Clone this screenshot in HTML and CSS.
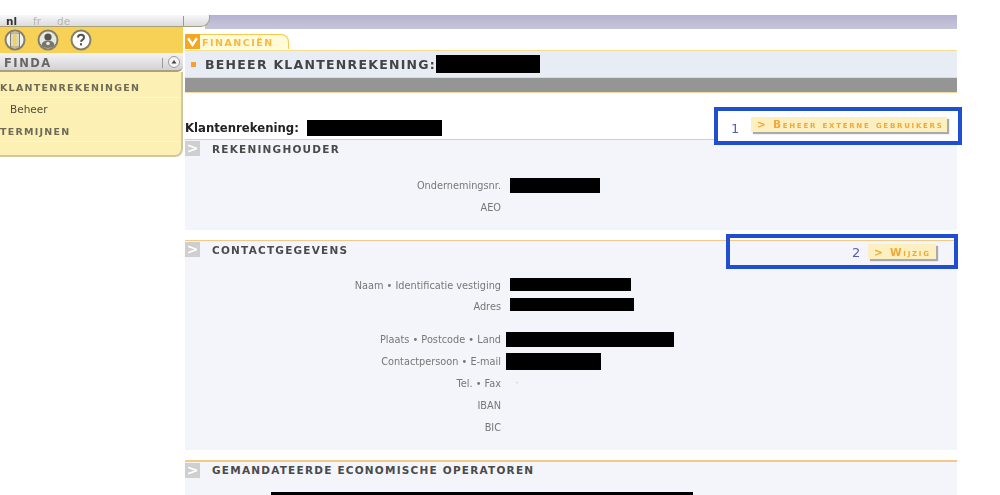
FILE: index.html
```html
<!DOCTYPE html>
<html lang="nl">
  <head>
    <meta charset="UTF-8" />
    <title>Beheer klantenrekening</title>
    <link rel="stylesheet" href="styles.css">
  </head>
  <body>
    <div class="page">
      <div class="sidebar">
        <div class="lang-bar">
          <span class="lang lang-active">nl</span>
          <span class="lang">fr</span>
          <span class="lang">de</span>
          <span class="lang-divider"></span>
        </div>
        <div class="toolbar">
          <svg class="tool-icon" viewBox="0 0 22 22">
            <circle cx="11" cy="11" r="9.5" fill="#f4f4ee" stroke="#85806c" stroke-width="2"/>
            <rect x="6.5" y="4" width="9" height="14" fill="#d8d8cc" stroke="#85806c"/>
            <rect x="9" y="4.500" width="3.500" height="13" fill="#f3d25c"/>
          </svg>
          <svg class="tool-icon" viewBox="0 0 22 22">
            <circle cx="11" cy="11" r="9.500" fill="#e8e8e2" stroke="#85806c" stroke-width="2"/>
            <circle cx="11" cy="8" r="3.600" fill="#55554f"/>
            <path d="M4.500 17c0-4 3-5.500 6.500-5.500s6.500 1.500 6.500 5.500c-2 2.500-11 2.500-13 0z" fill="#777770"/>
            <circle cx="11" cy="14.500" r="1.800" fill="#e8e8e2"/>
          </svg>
          <svg class="tool-icon" viewBox="0 0 22 22">
            <circle cx="11" cy="11" r="9.500" fill="#fff" stroke="#85806c" stroke-width="2"/>
            <path d="M8 8.500c0-3.700 6-3.700 6 0 0 2.300-3 2.300-3 4.300" fill="none" stroke="#55544c" stroke-width="2"/>
            <rect x="10" y="14.200" width="2" height="2.200" fill="#55544c"/>
          </svg>
        </div>
        <div class="menu-head">
          <span class="menu-title">FINDA</span>
          <span class="menu-divider"></span>
          <svg class="menu-toggle" viewBox="0 0 12 12">
            <circle cx="6" cy="6" r="5.500" fill="#f4f4f6" stroke="#9a9a9a"/>
            <path d="M3.500 7.500 6 4l2.500 3.500z" fill="#444"/>
          </svg>
        </div>
        <ul class="menu">
          <li class="menu-item">KLANTENREKENINGEN</li>
          <li class="menu-sub">Beheer</li>
          <li class="menu-item">TERMIJNEN</li>
        </ul>
      </div>

      <div class="main">
        <div class="top-bar"></div>
        <div class="tab-row">
          <span class="tab-arrow">
            <svg viewBox="0 0 12 12"><path d="M2 3l4 6 4-6" fill="none" stroke="#fff" stroke-width="2.200"/></svg>
          </span>
          <span class="tab">FINANCIËN</span>
        </div>
        <div class="title-band">
          <span class="title-dot"></span>
          <h1 class="title">BEHEER KLANTENREKENING:</h1>
          <span class="redact title-redact"></span>
        </div>
        <div class="gray-band"></div>

        <div class="account-row">
          <strong class="account-label">Klantenrekening:</strong>
          <span class="redact account-redact"></span>
          <button class="action action-wide">&gt; Beheer externe gebruikers</button>
        </div>

        <div class="section section-holder">
          <div class="section-head">
            <span class="section-arrow">&gt;</span>
            <h2 class="section-title">REKENINGHOUDER</h2>
          </div>
          <div class="fields">
            <div class="field"><span class="field-label">Ondernemingsnr.</span><span class="redact" style="width: 90px"></span></div>
            <div class="field"><span class="field-label">AEO</span></div>
          </div>
        </div>

        <div class="section section-contact">
          <div class="section-head">
            <span class="section-arrow">&gt;</span>
            <h2 class="section-title">CONTACTGEGEVENS</h2>
            <button class="action action-small">&gt; Wijzig</button>
          </div>
          <div class="fields">
            <div class="field"><span class="field-label">Naam • Identificatie vestiging</span><span class="redact redact-thin" style="width: 121px"></span></div>
            <div class="field"><span class="field-label">Adres</span><span class="redact redact-thin" style="width: 124px"></span></div>
            <div class="field field-gap"><span class="field-label">Plaats • Postcode • Land</span><span class="redact redact-left" style="width: 168px"></span></div>
            <div class="field"><span class="field-label">Contactpersoon • E-mail</span><span class="redact redact-left redact-tall" style="width: 95px"></span></div>
            <div class="field"><span class="field-label">Tel. • Fax</span><span class="field-dot">•</span></div>
            <div class="field"><span class="field-label">IBAN</span></div>
            <div class="field"><span class="field-label">BIC</span></div>
          </div>
        </div>

        <div class="section section-operators">
          <div class="section-head">
            <span class="section-arrow">&gt;</span>
            <h2 class="section-title">GEMANDATEERDE ECONOMISCHE OPERATOREN</h2>
          </div>
          <span class="redact operators-redact"></span>
        </div>
      </div>

      <div class="callout callout-one"><span class="callout-num">1</span></div>
      <div class="callout callout-two"><span class="callout-num">2</span></div>
    </div>
  </body>
</html>
```

FILE: styles.css
```css
html,
body {
  margin: 0;
  height: 495px;
  overflow: hidden;
  background-color: #fff;
}
body {
  font-family: "DejaVu Sans", Verdana, sans-serif;
  font-size: 10px;
  color: #666;
}
.page {
  position: relative;
  display: flex;
  align-items: flex-start;
  padding-top: 15px;
  filter: blur(0.45px);
}
.redact {
  display: inline-block;
  height: 18px;
  background-color: #000;
}

/* sidebar */
.sidebar {
  width: 183px;
  flex-shrink: 0;
  margin-right: 2px;
}
.lang-bar {
  display: flex;
  align-items: center;
  position: relative;
  z-index: 1;
  width: 210px;
  height: 12px;
  padding-left: 6px;
  gap: 16px;
  box-sizing: border-box;
  background: linear-gradient(#f8f8fa, #dcdce0);
  border-bottom: 1px solid #a8a078;
  border-right: 1px solid #a8a078;
  border-bottom-right-radius: 9px;
  font-size: 10.500px;
  color: #b4b4b4;
}
.lang-active {
  font-weight: bold;
  color: #333;
}
.lang-divider {
  position: absolute;
  left: 183px;
  top: 1px;
  width: 1px;
  height: 10px;
  background-color: #999;
}
.toolbar {
  display: flex;
  align-items: center;
  gap: 11px;
  height: 26px;
  padding-left: 4px;
  background-color: #f7d155;
}
.tool-icon {
  width: 22px;
  height: 22px;
}
.menu-head {
  display: flex;
  align-items: center;
  height: 19px;
  padding: 3px 3px 0 4px;
  box-sizing: border-box;
  background: linear-gradient(#f4f4f6, #d2d2d6);
  border-bottom: 2px solid #aaa27e;
  border-bottom-right-radius: 6px;
}
.menu-title {
  font-size: 11.500px;
  font-weight: bold;
  letter-spacing: 1.500px;
  color: #666;
}
.menu-divider {
  margin-left: auto;
  margin-right: 5px;
  width: 1px;
  height: 10px;
  background-color: #999;
}
.menu-toggle {
  width: 12px;
  height: 12px;
  margin-top: -2px;
}
.menu {
  list-style: none;
  margin: 0;
  padding: 4px 0 0;
  height: 85px;
  box-sizing: border-box;
  background-color: #fdf0b4;
  border-right: 2px solid #cfc8a0;
  border-bottom: 2px solid #cfc8a0;
  border-bottom-right-radius: 8px;
}
.menu-item {
  height: 22px;
  padding-top: 1px;
  line-height: 22px;
  font-size: 9.500px;
  font-weight: bold;
  letter-spacing: 1.250px;
  color: #6e6a58;
  border-bottom: 1px solid #fdf6d2;
  box-sizing: border-box;
}
.menu-sub {
  height: 22px;
  line-height: 22px;
  padding-left: 10px;
  font-size: 10.500px;
  color: #4f4c3c;
  box-sizing: border-box;
}

/* main column */
.main {
  width: 772px;
  flex-shrink: 0;
}
.top-bar {
  height: 14px;
  margin-left: 20px;
  background: linear-gradient(#b3b3d0, #c6c6da);
}
.tab-row {
  display: flex;
  height: 15px;
  margin-top: 5px;
}
.tab-arrow {
  width: 15px;
  height: 15px;
  padding: 1px;
  box-sizing: border-box;
  background-color: #f5a81f;
}
.tab-arrow svg {
  display: block;
}
.tab {
  width: 89px;
  height: 15px;
  padding-left: 2px;
  box-sizing: border-box;
  line-height: 15px;
  background-color: #fffbd8;
  border-top: 1px solid #f6c850;
  border-right: 1px solid #f6c850;
  border-top-right-radius: 8px;
  font-size: 9.500px;
  font-weight: bold;
  letter-spacing: 1.500px;
  color: #f5b942;
}
.title-band {
  display: flex;
  align-items: center;
  height: 27px;
  margin-top: 1px;
  padding: 0 0 0 6px;
  box-sizing: border-box;
  background-color: #e8ecf4;
  border-top: 1px solid #f8dc90;
}
.title-dot {
  width: 5px;
  height: 5px;
  margin-right: 9px;
  background-color: #f5a030;
}
.title {
  margin: 0;
  font-size: 12.500px;
  font-weight: bold;
  letter-spacing: 1.260px;
  color: #444;
}
.title-redact {
  width: 104px;
}
.gray-band {
  height: 16px;
  box-sizing: border-box;
  background-color: #959595;
  border-top: 1px solid #f7d8a0;
  border-bottom: 1px solid #f7d8a0;
}
.account-row {
  display: flex;
  align-items: center;
  height: 46px;
  padding-top: 24px;
  box-sizing: border-box;
}
.account-label {
  font-size: 11.700px;
  color: #222;
  width: 122px;
  flex-shrink: 0;
}
.account-redact {
  width: 135px;
  height: 16px;
}
.action {
  position: relative;
  z-index: 2;
  margin-left: auto;
  height: 15px;
  padding: 0 0 0 6px;
  border: none;
  background-color: #fdf0c0;
  box-shadow: 2px 2px 1px #aaa;
  font-family: "DejaVu Sans", Verdana, sans-serif;
  font-size: 10.500px;
  font-weight: bold;
  font-variant: small-caps;
  letter-spacing: 1.750px;
  color: #f0a838;
  text-align: left;
  white-space: nowrap;
}
.action-wide {
  width: 196px;
  margin-right: 10px;
  margin-top: -8px;
}
.action-small {
  width: 68px;
  margin-right: 21px;
  margin-top: 3px;
}

/* sections */
.section {
  background-color: #f3f5fa;
  border-top: 1px solid #f6c888;
  box-sizing: border-box;
}
.section-holder {
  height: 91px;
}
.section-contact {
  height: 210px;
  margin-top: 10px;
}
.section-operators {
  position: relative;
  height: 40px;
  margin-top: 10px;
  border-top-width: 2px;
}
.section-head {
  display: flex;
  align-items: flex-start;
  height: 20px;
}
.section-arrow {
  width: 15px;
  height: 15px;
  margin-top: 1px;
  margin-right: 12px;
  background-color: #cfcfcf;
  color: #fff;
  font-size: 14px;
  font-weight: bold;
  line-height: 15px;
  text-align: center;
}
.section-title {
  margin: 3px 0 0;
  font-size: 10.500px;
  font-weight: bold;
  letter-spacing: 1.220px;
  color: #4a4a4a;
}
.section-operators .section-title {
  margin-top: 2px;
}
.fields {
  padding-top: 14px;
}
.field {
  display: flex;
  align-items: center;
  height: 22px;
}
.field:first-child {
  height: 20px;
}
.section-holder .field:first-child {
  height: 22px;
}
.field-gap {
  margin-top: 11px;
}
.field-label {
  width: 316px;
  flex-shrink: 0;
  margin-right: 9px;
  text-align: right;
  font-size: 9.750px;
  color: #777;
}
.field .redact {
  height: 15px;
}
.field .redact-thin {
  height: 13px;
  margin-bottom: 3px;
}
.field:first-child .redact-thin {
  margin-bottom: 1px;
}
.field .redact-tall {
  height: 17px;
}
.field .redact-left {
  margin-left: -4px;
}
.field-dot {
  margin-left: 5px;
  font-size: 7px;
  color: #ddd;
}
.operators-redact {
  position: absolute;
  left: 86px;
  top: 30px;
  width: 422px;
  height: 10px;
}

/* annotation boxes drawn over the screenshot */
.callout {
  position: absolute;
  box-sizing: border-box;
  border: 4px solid #1f4fd0;
}
.callout-one {
  left: 714px;
  top: 107px;
  width: 248px;
  height: 38px;
  background-color: #fff;
}
.callout-two {
  left: 726px;
  top: 234px;
  width: 232px;
  height: 35px;
}
.callout-num {
  position: absolute;
  font-size: 13px;
  color: #5560b0;
}
.callout-one .callout-num {
  left: 13px;
  top: 10px;
}
.callout-two .callout-num {
  left: 122px;
  top: 7px;
}
```
